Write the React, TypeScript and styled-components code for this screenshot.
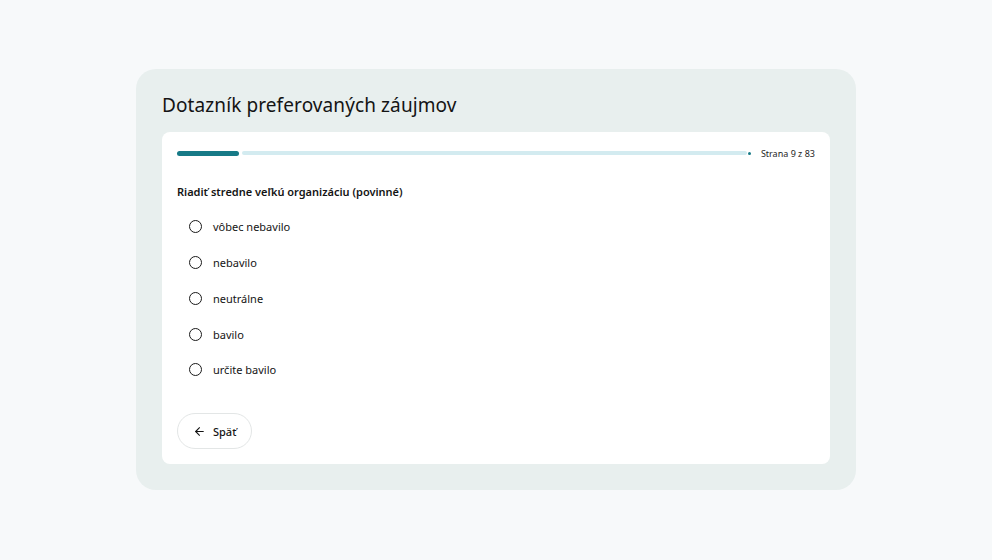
import styled, { createGlobalStyle } from 'styled-components';

const GlobalStyle = createGlobalStyle`
  html, body {
    margin: 0;
    padding: 0;
    background: #f7f9fa;
    font-family: 'Noto Sans', 'Open Sans', sans-serif;
    color: #141414;
  }
`;

const Page = styled.div`
  width: 992px;
  height: 560px;
  display: flex;
  justify-content: center;
  padding-top: 69px;
  box-sizing: border-box;
`;

const Shell = styled.section`
  width: 720px;
  height: 421px;
  box-sizing: border-box;
  background: #e8efee;
  border-radius: 20px;
  padding: 22px 26px 26px;
  display: flex;
  flex-direction: column;
`;

const Title = styled.h1`
  margin: 0 0 13px;
  font-size: 19px;
  font-weight: 400;
  line-height: 28px;
  letter-spacing: 0.1px;
`;

const Card = styled.div`
  flex: 1;
  background: #ffffff;
  border-radius: 8px;
  padding: 18px 15px 15px;
  display: flex;
  flex-direction: column;
`;

const ProgressRow = styled.div`
  display: flex;
  align-items: center;
  gap: 10px;
  height: 6px;
`;

const Track = styled.div`
  flex: 1;
  display: flex;
  align-items: center;
`;

const Filled = styled.div`
  height: 5px;
  border-radius: 3px;
  background: #177a87;
  margin-right: 3px;
`;

const Rest = styled.div`
  flex: 1;
  height: 4px;
  border-radius: 2px;
  background: #d3ebf0;
`;

const Stop = styled.div`
  width: 3px;
  height: 3px;
  border-radius: 50%;
  background: #177a87;
  margin-left: 1px;
`;

const PageCount = styled.span`
  font-size: 9px;
  white-space: nowrap;
  color: #1e1e1e;
`;

const Question = styled.h2`
  margin: 28px 0 9px;
  font-size: 11px;
  font-weight: 600;
  line-height: 16px;
`;

const Options = styled.div`
  display: flex;
  flex-direction: column;
`;

const Option = styled.label`
  display: flex;
  align-items: center;
  gap: 11px;
  height: 35.75px;
  padding-left: 12px;
  font-size: 11px;
  cursor: pointer;
`;

const Radio = styled.span`
  width: 13px;
  height: 13px;
  box-sizing: border-box;
  border: 1.6px solid #1a1a1a;
  border-radius: 50%;
  flex-shrink: 0;
`;

const Footer = styled.div`
  margin-top: auto;
  display: flex;
`;

const BackButton = styled.button`
  display: flex;
  align-items: center;
  gap: 7px;
  height: 36px;
  padding: 0 15px 0 15px;
  border: 1px solid #e3e6e6;
  border-radius: 18px;
  background: #ffffff;
  font-family: inherit;
  font-size: 11px;
  font-weight: 500;
  color: #141414;
  cursor: pointer;
`;

const options = ['vôbec nebavilo', 'nebavilo', 'neutrálne', 'bavilo', 'určite bavilo'];

export default function App() {
  const current = 9;
  const total = 83;

  return (
    <>
      <GlobalStyle />
      <Page>
        <Shell>
          <Title>Dotazník preferovaných záujmov</Title>
          <Card>
            <ProgressRow>
              <Track>
                <Filled style={{ width: `${(current / total) * 100}%` }} />
                <Rest />
                <Stop />
              </Track>
              <PageCount>
                Strana {current} z {total}
              </PageCount>
            </ProgressRow>
            <Question>Riadiť stredne veľkú organizáciu (povinné)</Question>
            <Options>
              {options.map((o) => (
                <Option key={o}>
                  <Radio />
                  {o}
                </Option>
              ))}
            </Options>
            <Footer>
              <BackButton type="button">
                <svg width="13" height="13" viewBox="0 0 24 24" fill="none" stroke="#141414" strokeWidth="2" strokeLinecap="round" strokeLinejoin="round">
                  <path d="M19 12H5" />
                  <path d="M12 19l-7-7 7-7" />
                </svg>
                Späť
              </BackButton>
            </Footer>
          </Card>
        </Shell>
      </Page>
    </>
  );
}
